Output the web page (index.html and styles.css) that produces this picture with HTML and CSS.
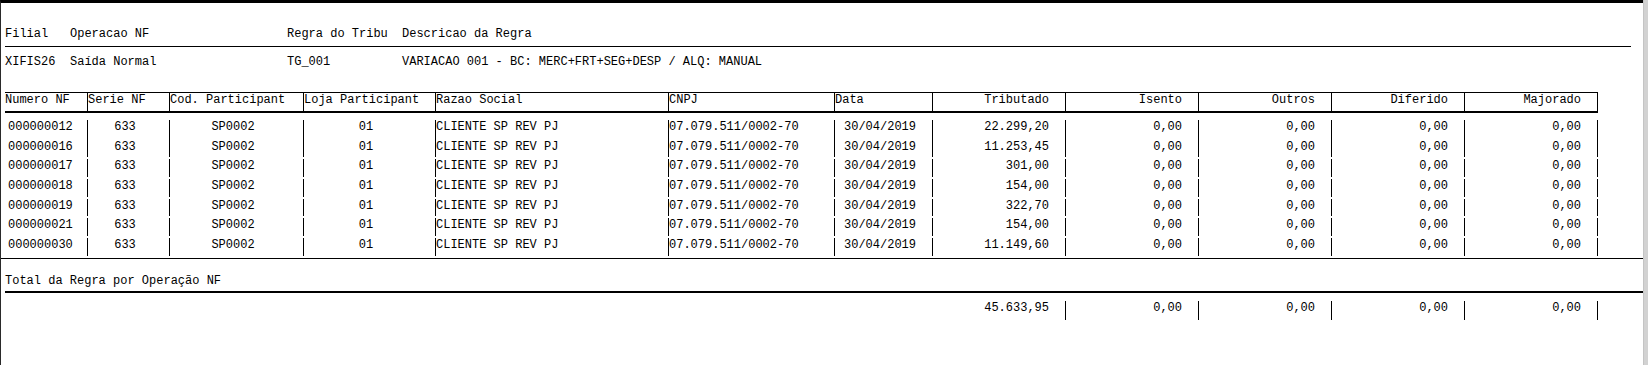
FILE: index.html
```html
<!DOCTYPE html>
<html lang="pt-BR">
<head>
<meta charset="utf-8">
<title>Relatório - Regra do Tributo</title>
<link rel="stylesheet" href="styles.css">
</head>
<body>
<div class="frame">
  <main class="report">
    <div class="info info-head">
      <span>Filial</span><span>Operacao NF</span><span>Regra do Tribu</span><span>Descricao da Regra</span>
    </div>
    <div class="info info-vals">
      <span>XIFIS26</span><span>Saída Normal</span><span>TG_001</span><span>VARIACAO 001 - BC: MERC+FRT+SEG+DESP / ALQ: MANUAL</span>
    </div>

    <div class="grid thead">
      <div class="cell h">Numero NF</div>
      <div class="cell h b">Serie NF</div>
      <div class="cell h b">Cod. Participant</div>
      <div class="cell h b">Loja Participant</div>
      <div class="cell h b">Razao Social</div>
      <div class="cell h b">CNPJ</div>
      <div class="cell h b">Data</div>
      <div class="cell h b r">Tributado</div>
      <div class="cell h b r">Isento</div>
      <div class="cell h b r">Outros</div>
      <div class="cell h b r">Diferido</div>
      <div class="cell h b r last">Majorado</div>
    </div>

    <div class="tbody">
      <div class="grid row joined">
        <div class="cell num">000000012</div><div class="cell b c">633</div><div class="cell b c">SP0002</div><div class="cell b c">01</div><div class="cell b">CLIENTE SP REV PJ</div><div class="cell b">07.079.511/0002-70</div><div class="cell b c">30/04/2019</div><div class="cell b r">22.299,20</div><div class="cell b r">0,00</div><div class="cell b r">0,00</div><div class="cell b r">0,00</div><div class="cell b r last">0,00</div>
      </div>
      <div class="grid row">
        <div class="cell num">000000016</div><div class="cell b c">633</div><div class="cell b c">SP0002</div><div class="cell b c">01</div><div class="cell b">CLIENTE SP REV PJ</div><div class="cell b">07.079.511/0002-70</div><div class="cell b c">30/04/2019</div><div class="cell b r">11.253,45</div><div class="cell b r">0,00</div><div class="cell b r">0,00</div><div class="cell b r">0,00</div><div class="cell b r last">0,00</div>
      </div>
      <div class="grid row">
        <div class="cell num">000000017</div><div class="cell b c">633</div><div class="cell b c">SP0002</div><div class="cell b c">01</div><div class="cell b">CLIENTE SP REV PJ</div><div class="cell b">07.079.511/0002-70</div><div class="cell b c">30/04/2019</div><div class="cell b r">301,00</div><div class="cell b r">0,00</div><div class="cell b r">0,00</div><div class="cell b r">0,00</div><div class="cell b r last">0,00</div>
      </div>
      <div class="grid row">
        <div class="cell num">000000018</div><div class="cell b c">633</div><div class="cell b c">SP0002</div><div class="cell b c">01</div><div class="cell b">CLIENTE SP REV PJ</div><div class="cell b">07.079.511/0002-70</div><div class="cell b c">30/04/2019</div><div class="cell b r">154,00</div><div class="cell b r">0,00</div><div class="cell b r">0,00</div><div class="cell b r">0,00</div><div class="cell b r last">0,00</div>
      </div>
      <div class="grid row">
        <div class="cell num">000000019</div><div class="cell b c">633</div><div class="cell b c">SP0002</div><div class="cell b c">01</div><div class="cell b">CLIENTE SP REV PJ</div><div class="cell b">07.079.511/0002-70</div><div class="cell b c">30/04/2019</div><div class="cell b r">322,70</div><div class="cell b r">0,00</div><div class="cell b r">0,00</div><div class="cell b r">0,00</div><div class="cell b r last">0,00</div>
      </div>
      <div class="grid row">
        <div class="cell num">000000021</div><div class="cell b c">633</div><div class="cell b c">SP0002</div><div class="cell b c">01</div><div class="cell b">CLIENTE SP REV PJ</div><div class="cell b">07.079.511/0002-70</div><div class="cell b c">30/04/2019</div><div class="cell b r">154,00</div><div class="cell b r">0,00</div><div class="cell b r">0,00</div><div class="cell b r">0,00</div><div class="cell b r last">0,00</div>
      </div>
      <div class="grid row">
        <div class="cell num">000000030</div><div class="cell b c">633</div><div class="cell b c">SP0002</div><div class="cell b c">01</div><div class="cell b">CLIENTE SP REV PJ</div><div class="cell b">07.079.511/0002-70</div><div class="cell b c">30/04/2019</div><div class="cell b r">11.149,60</div><div class="cell b r">0,00</div><div class="cell b r">0,00</div><div class="cell b r">0,00</div><div class="cell b r last">0,00</div>
      </div>
    </div>

    <div class="total-label">Total da Regra por Operação NF</div>

    <div class="grid totals">
      <div class="cell"></div><div class="cell"></div><div class="cell"></div><div class="cell"></div><div class="cell"></div><div class="cell"></div><div class="cell"></div>
      <div class="cell r">45.633,95</div><div class="cell b r">0,00</div><div class="cell b r">0,00</div><div class="cell b r">0,00</div><div class="cell b r last">0,00</div>
    </div>
  </main>
  <div class="scrollbar"></div>
</div>
</body>
</html>
```

FILE: styles.css
```css
* { box-sizing: border-box; }

html, body {
  margin: 0;
  padding: 0;
  background: #ffffff;
}

body {
  font-family: "Liberation Mono", "Courier New", monospace;
  font-size: 12px;
  line-height: 14px;
  color: #000000;
}

.frame {
  display: flex;
  width: 1648px;
  height: 365px;
  overflow: hidden;
}

.report {
  flex: 1;
  border-top: 3px solid #000000;
  border-left: 1px solid #2a2a2a;
  padding-left: 4px;
  white-space: nowrap;
}

.scrollbar {
  width: 5px;
  background: #d2d2d2;
  border-left: 1px solid #c4c4c4;
}

/* header info block */
.info {
  display: grid;
  grid-template-columns: 65px 217px 115px 1fr;
}

.info-head {
  margin-top: 24px;
  margin-right: 12px;
  padding-bottom: 5px;
  border-bottom: 1px solid #000000;
}

.info-vals {
  margin-top: 8px;
}

/* table grid */
.grid {
  display: grid;
  grid-template-columns: 82px 82px 134px 132px 233px 166px 98px 133px 133px 133px 133px 134px;
  width: 1593px;
}

.cell {
  overflow: hidden;
}

.cell.b { border-left: 1px solid #000000; }
.cell.last { border-right: 1px solid #000000; }
.cell.c { text-align: center; padding-right: 7px; }
.cell.r { text-align: right; padding-right: 16px; }
.cell.num { padding-left: 3px; }

.thead {
  margin-top: 23px;
  border-top: 1px solid #000000;
  border-bottom: 2px solid #000000;
}

.thead .cell {
  height: 18px;
}

.tbody {
  margin-top: 7px;
  margin-left: -4px;
  padding-left: 4px;
  border-bottom: 1px solid #000000;
}

.row {
  height: 19.67px;
  padding-bottom: 2px;
}

.row.joined {
  padding-bottom: 0;
}

.total-label {
  margin-left: 0;
  padding-top: 15px;
  padding-bottom: 3px;
  border-bottom: 2px solid #000000;
}

.totals {
  margin-top: 8px;
  height: 19px;
}
```
